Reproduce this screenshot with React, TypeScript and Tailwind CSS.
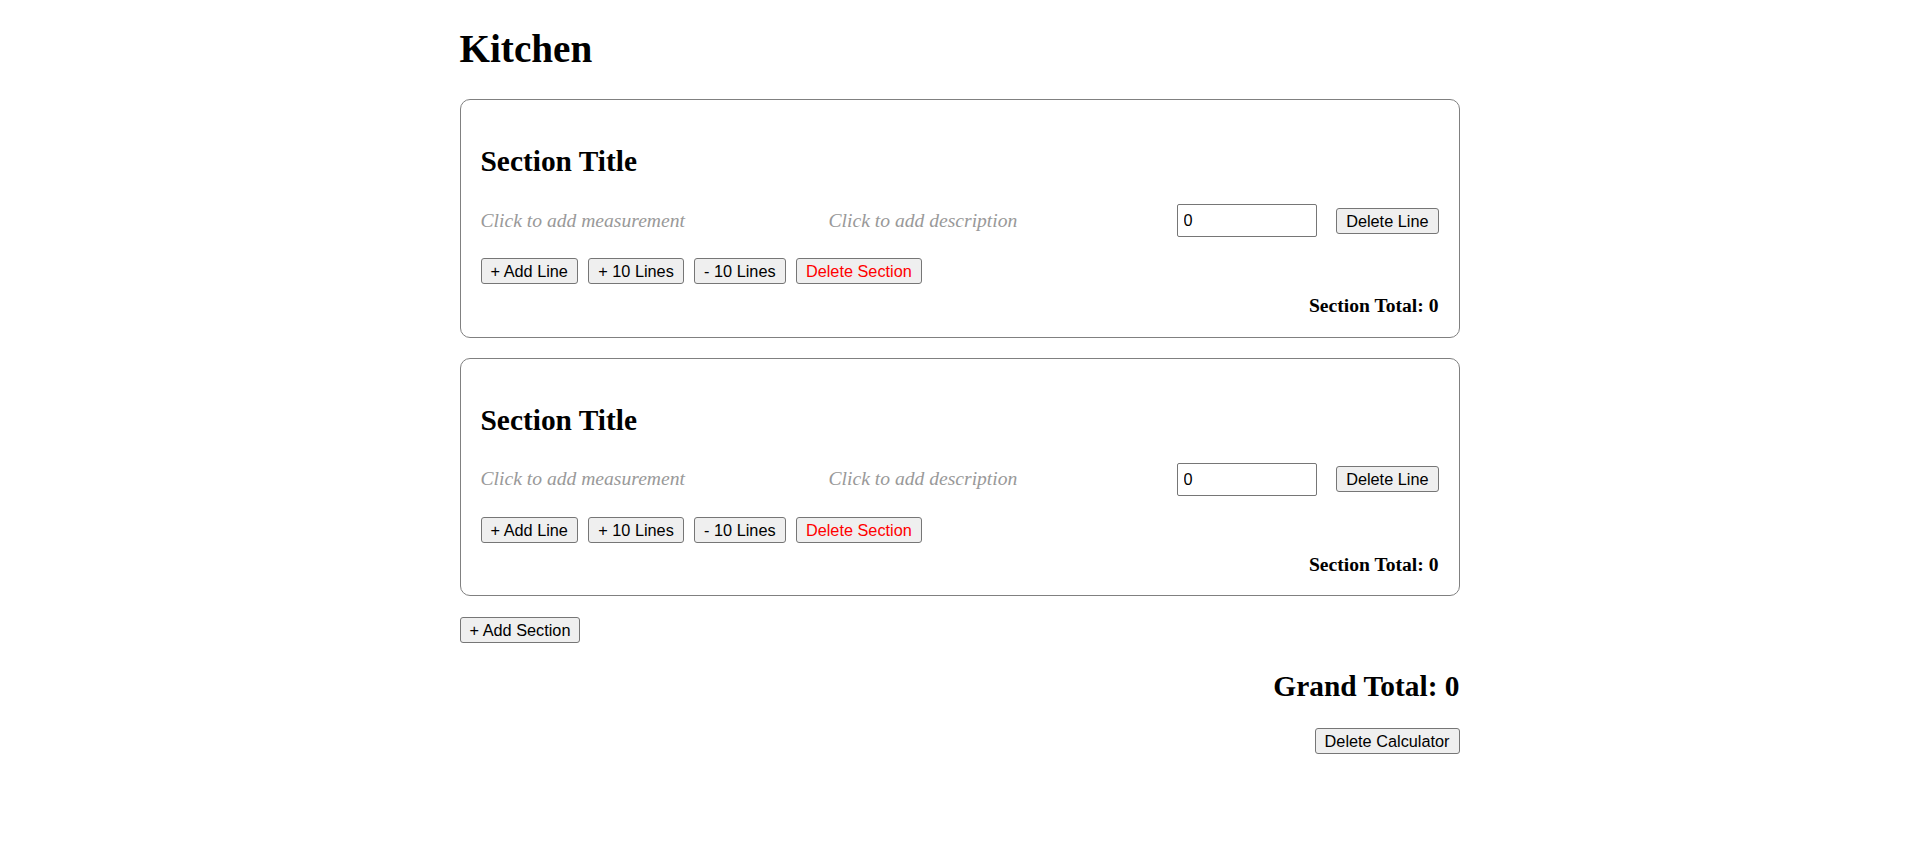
import { useState } from 'react'

type Line = { id: number; value: number }
type Section = { id: number; title: string; lines: Line[] }

const btn =
  'h-[26px] rounded-[3px] border border-[#767676] bg-[#efefef] px-[9px] text-[16.3px] leading-[18px] text-black [font-family:"Liberation_Sans",Arial,sans-serif]'

let nextId = 100

function SectionCard({
  section,
  onChange,
  onDelete,
}: {
  section: Section
  onChange: (s: Section) => void
  onDelete: () => void
}) {
  const total = section.lines.reduce((sum, l) => sum + (Number(l.value) || 0), 0)

  const addLines = (n: number) => {
    const extra = Array.from({ length: n }, () => ({ id: nextId++, value: 0 }))
    onChange({ ...section, lines: [...section.lines, ...extra] })
  }

  return (
    <div className="mb-[20px] rounded-[10px] border border-[#808080] px-[20px] pt-[20px] pb-[19px]">
      <h2 className="mt-[24px] mb-[26px] text-[29.4px] font-bold leading-[34px]">{section.title}</h2>
      {section.lines.map((line) => (
        <div key={line.id} className="mb-[21px] flex items-center gap-[19.6px]">
          <span className="flex-1 text-[19.6px] italic text-[#999999]">Click to add measurement</span>
          <span className="flex-1 text-[19.6px] italic text-[#999999]">Click to add description</span>
          <input
            type="number"
            value={line.value}
            onChange={(e) =>
              onChange({
                ...section,
                lines: section.lines.map((l) => (l.id === line.id ? { ...l, value: Number(e.target.value) } : l)),
              })
            }
            className='h-[33px] w-[140px] rounded-[2px] border border-[#767676] px-[6px] text-[16.3px] [font-family:"Liberation_Sans",Arial,sans-serif] [appearance:textfield] [&::-webkit-inner-spin-button]:appearance-none'
          />
          <button
            className={btn}
            onClick={() => onChange({ ...section, lines: section.lines.filter((l) => l.id !== line.id) })}
          >
            Delete Line
          </button>
        </div>
      ))}
      <div className="flex gap-[10.3px]">
        <button className={btn} onClick={() => addLines(1)}>
          + Add Line
        </button>
        <button className={btn} onClick={() => addLines(10)}>
          + 10 Lines
        </button>
        <button
          className={btn}
          onClick={() => onChange({ ...section, lines: section.lines.slice(0, Math.max(0, section.lines.length - 10)) })}
        >
          - 10 Lines
        </button>
        <button className={btn + ' !text-[#ff0000]'} onClick={onDelete}>
          Delete Section
        </button>
      </div>
      <p className="mt-[11px] text-right text-[19.6px] font-bold leading-[22.5px]">Section Total: {total}</p>
    </div>
  )
}

export default function App() {
  const [sections, setSections] = useState<Section[]>([
    { id: 1, title: 'Section Title', lines: [{ id: 2, value: 0 }] },
    { id: 3, title: 'Section Title', lines: [{ id: 4, value: 0 }] },
  ])

  const grand = sections.reduce((sum, s) => sum + s.lines.reduce((a, l) => a + (Number(l.value) || 0), 0), 0)

  return (
    <div className='min-h-screen bg-white text-black [font-family:"Liberation_Serif","Times_New_Roman",serif]'>
      <div className="mx-auto w-[1000px] pt-[26px]">
        <h1 className="mb-[28px] text-[39.2px] font-bold leading-[45px]">Kitchen</h1>
        {sections.map((s) => (
          <SectionCard
            key={s.id}
            section={s}
            onChange={(ns) => setSections(sections.map((x) => (x.id === s.id ? ns : x)))}
            onDelete={() => setSections(sections.filter((x) => x.id !== s.id))}
          />
        ))}
        <button
          className={btn + ' mt-[1px]'}
          onClick={() =>
            setSections([...sections, { id: nextId++, title: 'Section Title', lines: [{ id: nextId++, value: 0 }] }])
          }
        >
          + Add Section
        </button>
        <h2 className="mt-[26px] mb-[25px] text-right text-[29.4px] font-bold leading-[34px]">Grand Total: {grand}</h2>
        <div className="flex justify-end">
          <button className={btn} onClick={() => setSections([])}>
            Delete Calculator
          </button>
        </div>
      </div>
    </div>
  )
}
